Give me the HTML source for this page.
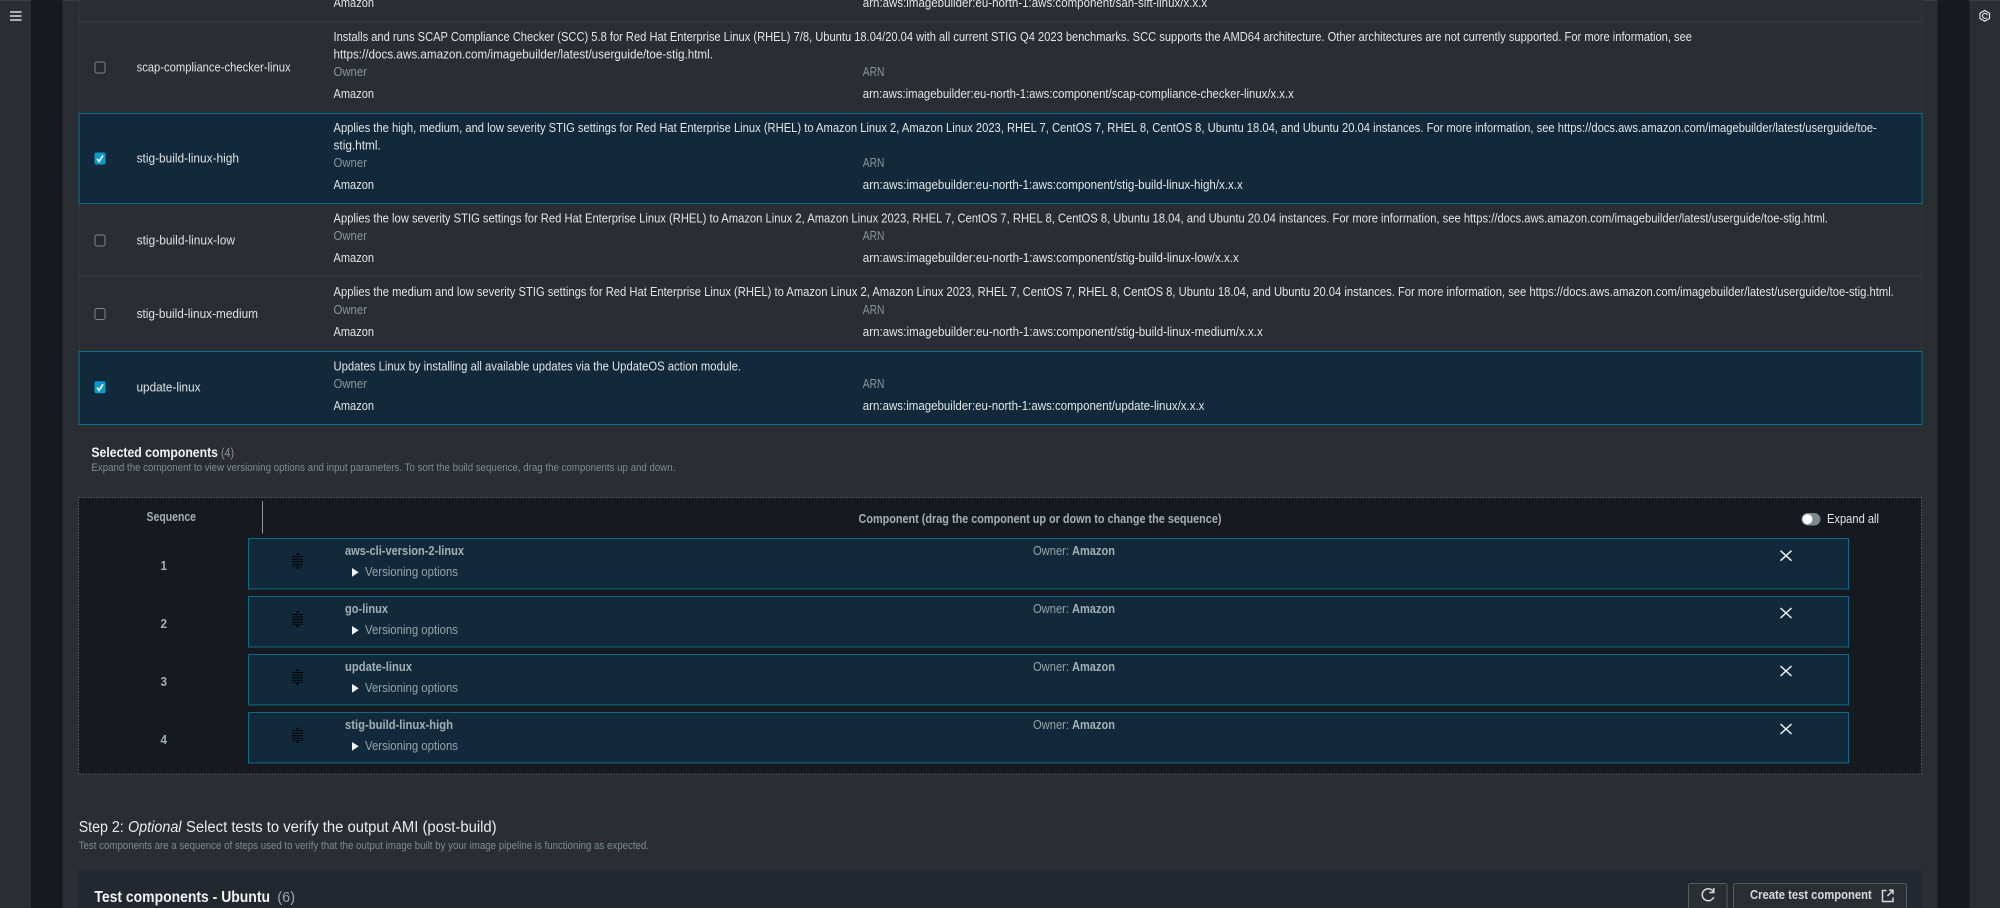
<!DOCTYPE html>
<html><head><meta charset="utf-8"><title>Image Builder</title>
<style>
html,body{margin:0;padding:0;background:#2a2e33;width:2000px;height:908px;overflow:hidden}
svg{display:block}
text{font-family:"Liberation Sans",sans-serif;font-size:12.5px;fill:#e1e5e5}
.g{fill:#8a9699}
.n{fill:#dde1e1;font-size:13px}
.b{font-weight:700}
.h{fill:#a3b0b3;font-weight:700;font-size:12.5px}
.v{fill:#95a5a8;font-size:12.5px}
</style></head><body>
<svg xmlns="http://www.w3.org/2000/svg" width="2000" height="908" viewBox="0 0 2000 908">
<defs>
<g id="cbo"><rect x="-5" y="-5.500" width="10" height="11" rx="2" fill="#25292e" stroke="#7d878c" stroke-width="1"/></g>
<g id="cbc"><rect x="-5.500" y="-6" width="11" height="12" rx="2" fill="#0a9bcb"/><path d="M-3 .3L-1 3L3 -3" fill="none" stroke="#fff" stroke-width="1.600"/></g>
<g id="drag" fill="#000"><rect x="-5.500" y="-5" width="11" height="1"/><rect x="-5.500" y="-2.400" width="11" height="1"/><rect x="-5.500" y=".2" width="11" height="1"/><rect x="-5.500" y="2.800" width="11" height="1"/><rect x="-5.500" y="5" width="11" height="1" opacity=".6"/><path d="M-2 -6L0 -8L2 -6Z"/><path d="M-2 6.500L0 8.500L2 6.500Z"/></g>
<g id="x"><path d="M-5.500 -5L5.500 5M5.500 -5L-5.500 5" stroke="#f2f3f3" stroke-width="1.500" fill="none"/></g>
</defs>

<rect width="2000" height="908" fill="#2a2e33"/>
<rect x="0" y="0" width="2000" height="1" fill="#3a3f45"/>
<rect x="31" y="0" width="31.500" height="908" fill="#16191f"/>
<rect x="1937.500" y="0" width="32" height="908" fill="#16191f"/>
<rect x="79" y="0" width="1843" height="425" fill="#2a2e33"/>
<rect x="78.500" y="0" width="1" height="351" fill="#33383e"/>
<rect x="1921.500" y="0" width="1" height="351" fill="#33383e"/>

<!-- side icons -->
<path d="M10 12H21.500M10 16H21.500M10 20H21.500" stroke="#d5dbdb" stroke-width="1.500"/>
<path d="M1984.800 10.500L1989.500 13.200V18.500L1984.800 21.200L1980 18.500V13.200Z" fill="none" stroke="#e1e5e5" stroke-width="1.200"/>
<path d="M1986.800 17.600A2.500 2.500 0 1 1 1987.400 15.200" fill="none" stroke="#e1e5e5" stroke-width="1.100"/>

<!-- row dividers -->
<rect x="79" y="21" width="1843" height="2" fill="#33383e"/>
<rect x="79" y="275" width="1843" height="2" fill="#33383e"/>

<!-- selected rows -->
<rect x="79" y="113.500" width="1843" height="90" fill="#12293b" stroke="#0b7089" stroke-width="1"/>
<rect x="79" y="351.500" width="1843" height="73" fill="#12293b" stroke="#0b7089" stroke-width="1"/>

<!-- top partial row -->
<text x="333.500" y="7" textLength="40.500" lengthAdjust="spacingAndGlyphs">Amazon</text>
<text x="862.800" y="7" textLength="344.300" lengthAdjust="spacingAndGlyphs">arn:aws:imagebuilder:eu-north-1:aws:component/san-sift-linux/x.x.x</text>

<!-- scap -->
<use href="#cbo" x="100" y="67.500"/>
<text class="n" x="136.600" y="71.500" textLength="154" lengthAdjust="spacingAndGlyphs">scap-compliance-checker-linux</text>
<text x="333.500" y="41" textLength="1358.500" lengthAdjust="spacingAndGlyphs">Installs and runs SCAP Compliance Checker (SCC) 5.8 for Red Hat Enterprise Linux (RHEL) 7/8, Ubuntu 18.04/20.04 with all current STIG Q4 2023 benchmarks. SCC supports the AMD64 architecture. Other architectures are not currently supported. For more information, see</text>
<text x="333.500" y="58.500" textLength="379.500" lengthAdjust="spacingAndGlyphs">https://docs.aws.amazon.com/imagebuilder/latest/userguide/toe-stig.html.</text>
<text class="g" x="333.500" y="76" textLength="33.500" lengthAdjust="spacingAndGlyphs">Owner</text>
<text class="g" x="862.800" y="76" textLength="21.600" lengthAdjust="spacingAndGlyphs">ARN</text>
<text x="333.500" y="98" textLength="40.500" lengthAdjust="spacingAndGlyphs">Amazon</text>
<text x="862.800" y="98" textLength="431" lengthAdjust="spacingAndGlyphs">arn:aws:imagebuilder:eu-north-1:aws:component/scap-compliance-checker-linux/x.x.x</text>

<!-- high -->
<use href="#cbc" x="100" y="158.500"/>
<text class="n" x="136.600" y="162.500" textLength="102.400" lengthAdjust="spacingAndGlyphs">stig-build-linux-high</text>
<text x="333.500" y="132" textLength="1543.300" lengthAdjust="spacingAndGlyphs">Applies the high, medium, and low severity STIG settings for Red Hat Enterprise Linux (RHEL) to Amazon Linux 2, Amazon Linux 2023, RHEL 7, CentOS 7, RHEL 8, CentOS 8, Ubuntu 18.04, and Ubuntu 20.04 instances. For more information, see https://docs.aws.amazon.com/imagebuilder/latest/userguide/toe-</text>
<text x="333.500" y="149.500" textLength="47.300" lengthAdjust="spacingAndGlyphs">stig.html.</text>
<text class="g" x="333.500" y="167" textLength="33.500" lengthAdjust="spacingAndGlyphs">Owner</text>
<text class="g" x="862.800" y="167" textLength="21.600" lengthAdjust="spacingAndGlyphs">ARN</text>
<text x="333.500" y="189" textLength="40.500" lengthAdjust="spacingAndGlyphs">Amazon</text>
<text x="862.800" y="189" textLength="380" lengthAdjust="spacingAndGlyphs">arn:aws:imagebuilder:eu-north-1:aws:component/stig-build-linux-high/x.x.x</text>

<!-- low -->
<use href="#cbo" x="100" y="240.500"/>
<text class="n" x="136.600" y="244.700" textLength="98.400" lengthAdjust="spacingAndGlyphs">stig-build-linux-low</text>
<text x="333.500" y="222.500" textLength="1494.500" lengthAdjust="spacingAndGlyphs">Applies the low severity STIG settings for Red Hat Enterprise Linux (RHEL) to Amazon Linux 2, Amazon Linux 2023, RHEL 7, CentOS 7, RHEL 8, CentOS 8, Ubuntu 18.04, and Ubuntu 20.04 instances. For more information, see https://docs.aws.amazon.com/imagebuilder/latest/userguide/toe-stig.html.</text>
<text class="g" x="333.500" y="240" textLength="33.500" lengthAdjust="spacingAndGlyphs">Owner</text>
<text class="g" x="862.800" y="240" textLength="21.600" lengthAdjust="spacingAndGlyphs">ARN</text>
<text x="333.500" y="262" textLength="40.500" lengthAdjust="spacingAndGlyphs">Amazon</text>
<text x="862.800" y="262" textLength="376" lengthAdjust="spacingAndGlyphs">arn:aws:imagebuilder:eu-north-1:aws:component/stig-build-linux-low/x.x.x</text>

<!-- medium -->
<use href="#cbo" x="100" y="314"/>
<text class="n" x="136.600" y="318" textLength="121.400" lengthAdjust="spacingAndGlyphs">stig-build-linux-medium</text>
<text x="333.500" y="296" textLength="1560.300" lengthAdjust="spacingAndGlyphs">Applies the medium and low severity STIG settings for Red Hat Enterprise Linux (RHEL) to Amazon Linux 2, Amazon Linux 2023, RHEL 7, CentOS 7, RHEL 8, CentOS 8, Ubuntu 18.04, and Ubuntu 20.04 instances. For more information, see https://docs.aws.amazon.com/imagebuilder/latest/userguide/toe-stig.html.</text>
<text class="g" x="333.500" y="314" textLength="33.500" lengthAdjust="spacingAndGlyphs">Owner</text>
<text class="g" x="862.800" y="314" textLength="21.600" lengthAdjust="spacingAndGlyphs">ARN</text>
<text x="333.500" y="336" textLength="40.500" lengthAdjust="spacingAndGlyphs">Amazon</text>
<text x="862.800" y="336" textLength="400" lengthAdjust="spacingAndGlyphs">arn:aws:imagebuilder:eu-north-1:aws:component/stig-build-linux-medium/x.x.x</text>

<!-- update -->
<use href="#cbc" x="100" y="387.300"/>
<text class="n" x="136.500" y="391.300" textLength="64" lengthAdjust="spacingAndGlyphs">update-linux</text>
<text x="333.500" y="370.500" textLength="407.500" lengthAdjust="spacingAndGlyphs">Updates Linux by installing all available updates via the UpdateOS action module.</text>
<text class="g" x="333.500" y="388" textLength="33.500" lengthAdjust="spacingAndGlyphs">Owner</text>
<text class="g" x="862.800" y="388" textLength="21.600" lengthAdjust="spacingAndGlyphs">ARN</text>
<text x="333.500" y="410" textLength="40.500" lengthAdjust="spacingAndGlyphs">Amazon</text>
<text x="862.800" y="410" textLength="341.600" lengthAdjust="spacingAndGlyphs">arn:aws:imagebuilder:eu-north-1:aws:component/update-linux/x.x.x</text>

<!-- selected components -->
<text x="91.400" y="457" class="b" style="font-size:13.500px;fill:#f2f3f3" textLength="126.600" lengthAdjust="spacingAndGlyphs">Selected components</text>
<text x="221" y="457" class="g" style="font-size:12.500px" textLength="13" lengthAdjust="spacingAndGlyphs">(4)</text>
<text x="91.400" y="471" class="g" style="font-size:10.800px;fill:#7f8c8f" textLength="584" lengthAdjust="spacingAndGlyphs">Expand the component to view versioning options and input parameters. To sort the build sequence, drag the components up and down.</text>

<!-- panel -->
<rect x="78.500" y="497.500" width="1843" height="276.500" fill="#16191f" stroke="#5a6066" stroke-width="1" stroke-dasharray="1.500 1.500"/>
<text x="146.500" y="521" class="h" textLength="49.500" lengthAdjust="spacingAndGlyphs">Sequence</text>
<rect x="262" y="501" width="1" height="32.500" fill="#8a9699"/>
<text x="858.500" y="523" class="h" textLength="363" lengthAdjust="spacingAndGlyphs">Component (drag the component up or down to change the sequence)</text>
<rect x="1801.500" y="513" width="19" height="12.500" rx="6.250" fill="#7d8a8c"/>
<circle cx="1807.500" cy="519.200" r="5" fill="#fff"/>
<text x="1827" y="523" style="font-size:12.500px" textLength="52" lengthAdjust="spacingAndGlyphs">Expand all</text>

<!-- items -->
<g>
<rect x="248.500" y="538.500" width="1600" height="50.500" fill="#12293b" stroke="#0b6a85"/>
<use href="#drag" x="297.500" y="561"/>
<text x="160.500" y="570" class="h" textLength="6.500" lengthAdjust="spacingAndGlyphs">1</text>
<text x="345" y="555" class="h" textLength="119" lengthAdjust="spacingAndGlyphs">aws-cli-version-2-linux</text>
<path d="M352 568V576.700L358.700 572.300Z" fill="#f2f3f3"/>
<text x="365" y="576" class="v" textLength="93" lengthAdjust="spacingAndGlyphs">Versioning options</text>
<text x="1033" y="555" class="v" textLength="36" lengthAdjust="spacingAndGlyphs">Owner:</text>
<text x="1072" y="555" class="h" textLength="43" lengthAdjust="spacingAndGlyphs">Amazon</text>
<use href="#x" x="1786" y="555.700"/>
</g>
<g>
<rect x="248.500" y="596.500" width="1600" height="50.500" fill="#12293b" stroke="#0b6a85"/>
<use href="#drag" x="297.500" y="619"/>
<text x="160.500" y="628" class="h" textLength="6.500" lengthAdjust="spacingAndGlyphs">2</text>
<text x="345" y="613" class="h" textLength="43" lengthAdjust="spacingAndGlyphs">go-linux</text>
<path d="M352 626V634.700L358.700 630.300Z" fill="#f2f3f3"/>
<text x="365" y="634" class="v" textLength="93" lengthAdjust="spacingAndGlyphs">Versioning options</text>
<text x="1033" y="613" class="v" textLength="36" lengthAdjust="spacingAndGlyphs">Owner:</text>
<text x="1072" y="613" class="h" textLength="43" lengthAdjust="spacingAndGlyphs">Amazon</text>
<use href="#x" x="1786" y="613"/>
</g>
<g>
<rect x="248.500" y="654.500" width="1600" height="50.500" fill="#12293b" stroke="#0b6a85"/>
<use href="#drag" x="297.500" y="677"/>
<text x="160.500" y="686" class="h" textLength="6.500" lengthAdjust="spacingAndGlyphs">3</text>
<text x="345" y="671" class="h" textLength="67" lengthAdjust="spacingAndGlyphs">update-linux</text>
<path d="M352 684V692.700L358.700 688.300Z" fill="#f2f3f3"/>
<text x="365" y="692" class="v" textLength="93" lengthAdjust="spacingAndGlyphs">Versioning options</text>
<text x="1033" y="671" class="v" textLength="36" lengthAdjust="spacingAndGlyphs">Owner:</text>
<text x="1072" y="671" class="h" textLength="43" lengthAdjust="spacingAndGlyphs">Amazon</text>
<use href="#x" x="1786" y="671"/>
</g>
<g>
<rect x="248.500" y="712.500" width="1600" height="50.500" fill="#12293b" stroke="#0b6a85"/>
<use href="#drag" x="297.500" y="735"/>
<text x="160.500" y="744" class="h" textLength="6.500" lengthAdjust="spacingAndGlyphs">4</text>
<text x="345" y="729" class="h" textLength="108" lengthAdjust="spacingAndGlyphs">stig-build-linux-high</text>
<path d="M352 742V750.700L358.700 746.300Z" fill="#f2f3f3"/>
<text x="365" y="750" class="v" textLength="93" lengthAdjust="spacingAndGlyphs">Versioning options</text>
<text x="1033" y="729" class="v" textLength="36" lengthAdjust="spacingAndGlyphs">Owner:</text>
<text x="1072" y="729" class="h" textLength="43" lengthAdjust="spacingAndGlyphs">Amazon</text>
<use href="#x" x="1786" y="729"/>
</g>

<!-- step 2 -->
<text x="78.700" y="832" style="font-size:15.500px;fill:#e9ebed" textLength="45" lengthAdjust="spacingAndGlyphs">Step 2:</text>
<text x="128" y="832" style="font-size:15.500px;font-style:italic;fill:#e9ebed" textLength="53.500" lengthAdjust="spacingAndGlyphs">Optional</text>
<text x="186" y="832" style="font-size:15.500px;fill:#e9ebed" textLength="310.600" lengthAdjust="spacingAndGlyphs">Select tests to verify the output AMI (post-build)</text>
<text x="78.700" y="849" style="font-size:10.800px;fill:#7f8c8f" textLength="570.300" lengthAdjust="spacingAndGlyphs">Test components are a sequence of steps used to verify that the output image built by your image pipeline is functioning as expected.</text>

<!-- test card -->
<rect x="78" y="871" width="1844" height="37" fill="#232830"/>
<text x="94.400" y="902" class="b" style="font-size:15.500px;fill:#f2f3f3" textLength="175.600" lengthAdjust="spacingAndGlyphs">Test components - Ubuntu</text>
<text x="277.400" y="902" style="font-size:15px;fill:#95a5a6" textLength="17.600" lengthAdjust="spacingAndGlyphs">(6)</text>
<rect x="1688.500" y="883.500" width="38.500" height="32" rx="2" fill="#2a2e33" stroke="#545b64"/>
<path d="M1713.300 891.500A6 6 0 1 0 1713.800 897" fill="none" stroke="#d5dbdb" stroke-width="1.500"/>
<path d="M1713.800 888V892.500H1709.300" fill="none" stroke="#d5dbdb" stroke-width="1.500"/>
<rect x="1733.500" y="883.500" width="173" height="32" rx="2" fill="#2a2e33" stroke="#545b64"/>
<text x="1750" y="899" class="b" style="font-size:12.500px;fill:#d5dbdb" textLength="121.700" lengthAdjust="spacingAndGlyphs">Create test component</text>
<path d="M1886.500 890.500H1882.500V901.500H1893V897.500" fill="none" stroke="#d5dbdb" stroke-width="1.500"/>
<path d="M1887.500 896L1892.800 890.500M1889 890.300H1893V894.300" fill="none" stroke="#d5dbdb" stroke-width="1.500"/>
</svg>
</body></html>
